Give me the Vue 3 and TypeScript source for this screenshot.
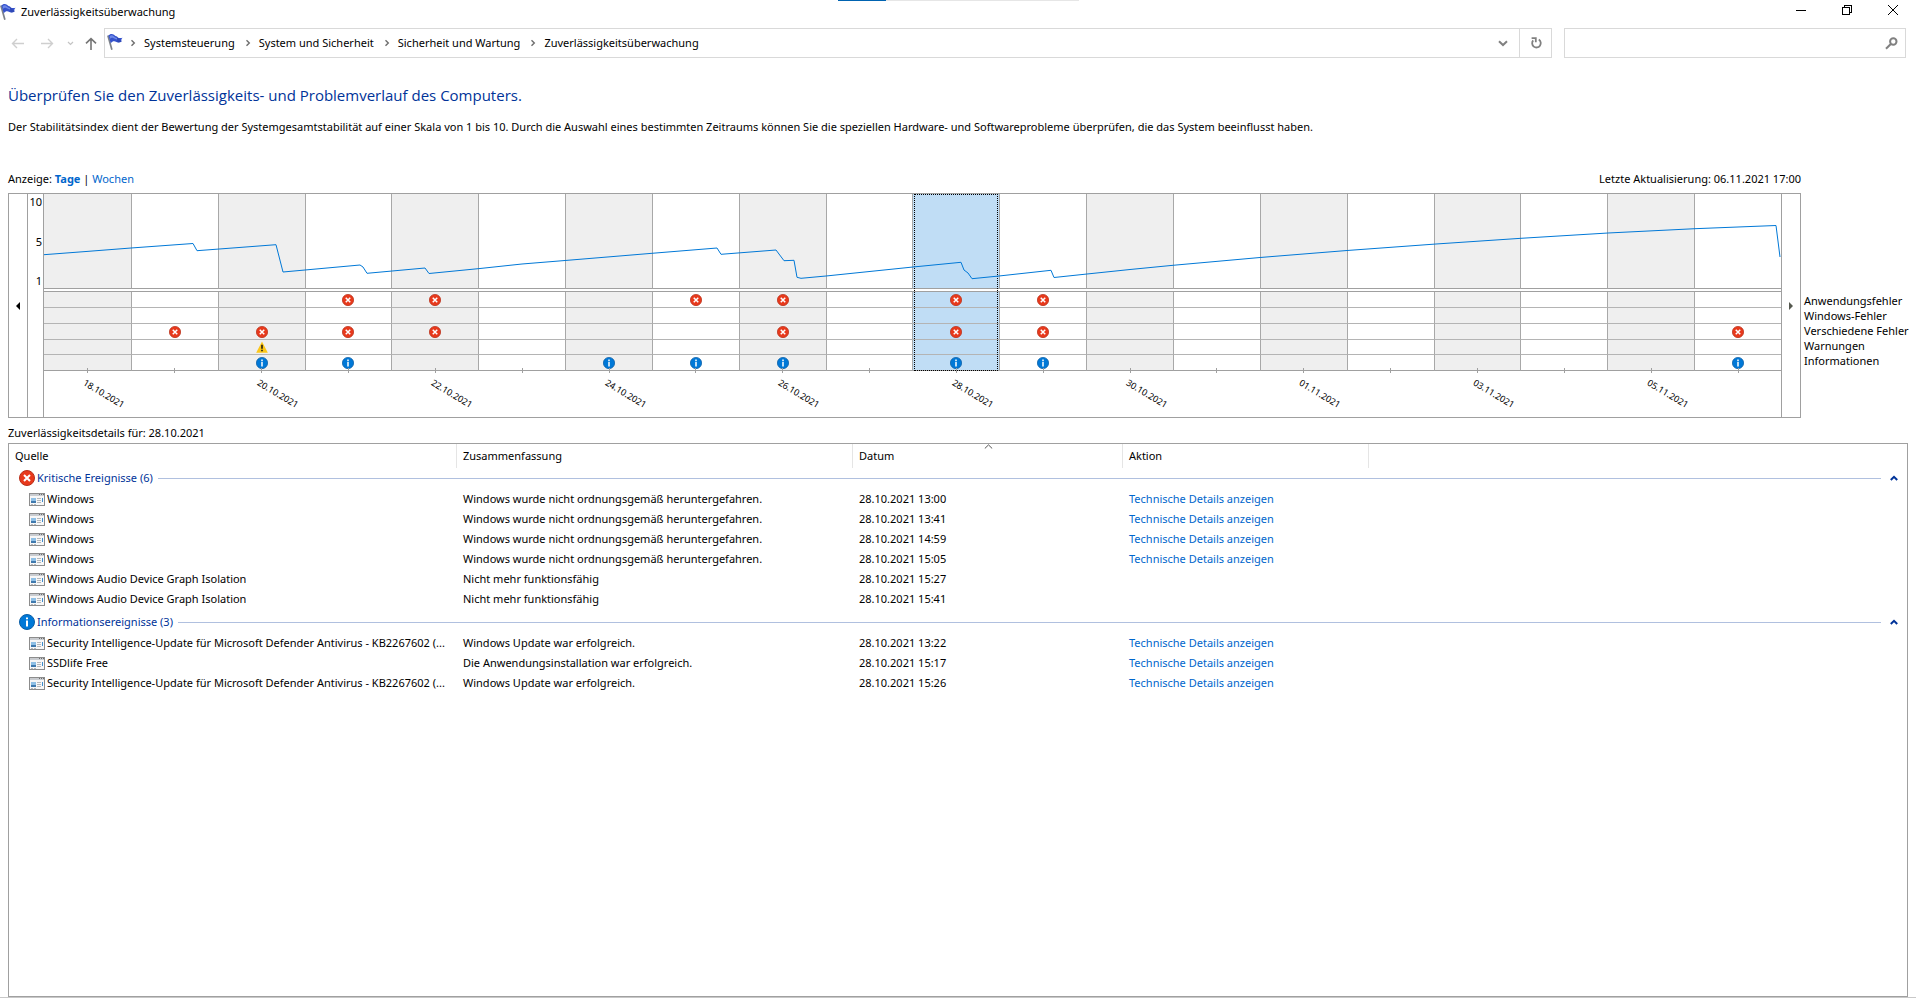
<script setup lang="ts">
import { computed, ref } from 'vue'

type Kind = 'error' | 'warning' | 'info'

interface EventRow {
  source: string
  summary: string
  date: string
  details: boolean
}

interface EventGroup {
  title: string
  kind: Kind
  open: boolean
  rows: EventRow[]
}

const crumbs = ['Systemsteuerung', 'System und Sicherheit', 'Sicherheit und Wartung', 'Zuverlässigkeitsüberwachung']

const categories: { label: string; kind: Kind; days: number[] }[] = [
  { label: 'Anwendungsfehler', kind: 'error', days: [3, 4, 7, 8, 10, 11] },
  { label: 'Windows-Fehler', kind: 'error', days: [] },
  { label: 'Verschiedene Fehler', kind: 'error', days: [1, 2, 3, 4, 8, 10, 11, 19] },
  { label: 'Warnungen', kind: 'warning', days: [2] },
  { label: 'Informationen', kind: 'info', days: [2, 3, 6, 7, 8, 10, 11, 19] },
]

const days = Array.from({ length: 20 }, (_, i) => {
  const d = new Date(2021, 9, 18 + i)
  const dd = String(d.getDate()).padStart(2, '0')
  const mm = String(d.getMonth() + 1).padStart(2, '0')
  return `${dd}.${mm}.${d.getFullYear()}`
})

const selected = ref(10)
const search = ref('')

// Stability index curve, drawn on a 1737 x 94 plot
const curve: [number, number][] = [
  [0, 60.7], [42, 57.5], [87, 54], [149, 49.5], [153, 56.7], [232, 50.7], [239, 78], [316, 71], [319, 73],
  [323, 79.3], [381, 74], [385, 79.5], [436, 74.5], [478, 70], [521, 66.5], [608, 59.3], [673, 54], [677, 60.3],
  [732, 56], [740, 66.7], [750, 66.3], [753, 83.3], [757, 84.3], [782, 82], [869, 73], [917, 68.3], [920, 76],
  [924, 79], [928, 84.7], [955, 82], [1007, 76.3], [1010, 83.5], [1043, 80], [1086, 75.5], [1129, 71.3],
  [1216, 63.5], [1303, 56.5], [1392, 50], [1477, 44.3], [1564, 39], [1651, 34.7], [1732, 31.5], [1736, 63],
]
const curvePoints = computed(() => curve.map((p) => p.join(',')).join(' '))

const crash = 'Windows wurde nicht ordnungsgemäß heruntergefahren.'
const defender = 'Security Intelligence-Update für Microsoft Defender Antivirus - KB2267602 (...'
const audio = 'Windows Audio Device Graph Isolation'

const groups = ref<EventGroup[]>([
  {
    title: 'Kritische Ereignisse (6)',
    kind: 'error',
    open: true,
    rows: [
      { source: 'Windows', summary: crash, date: '28.10.2021 13:00', details: true },
      { source: 'Windows', summary: crash, date: '28.10.2021 13:41', details: true },
      { source: 'Windows', summary: crash, date: '28.10.2021 14:59', details: true },
      { source: 'Windows', summary: crash, date: '28.10.2021 15:05', details: true },
      { source: audio, summary: 'Nicht mehr funktionsfähig', date: '28.10.2021 15:27', details: false },
      { source: audio, summary: 'Nicht mehr funktionsfähig', date: '28.10.2021 15:41', details: false },
    ],
  },
  {
    title: 'Informationsereignisse (3)',
    kind: 'info',
    open: true,
    rows: [
      { source: defender, summary: 'Windows Update war erfolgreich.', date: '28.10.2021 13:22', details: true },
      { source: 'SSDlife Free', summary: 'Die Anwendungsinstallation war erfolgreich.', date: '28.10.2021 15:17', details: true },
      { source: defender, summary: 'Windows Update war erfolgreich.', date: '28.10.2021 15:26', details: true },
    ],
  },
])
</script>

<template>
  <div class="window">
    <svg class="defs" width="0" height="0" aria-hidden="true">
      <symbol id="flag" viewBox="0 0 16 18">
        <path d="M.9 2.4 L4.9 16.8" stroke="#7d828a" stroke-width="1.7" fill="none" />
        <path d="M1.4 2.6 C3 .4 5.4 .6 7 1.8 C8.2 2.7 8.8 3.4 10 3.4 L10.6 4.4 C12 5.2 13.6 5.3 15.6 4.8 C14.4 6 14 6.8 14.6 8.4 C12.8 9.6 11 9.8 9.4 9 C7.4 8 5.6 8 3.8 10.4 Z" fill="#3552cc" />
        <path d="M2.6 3.2 C4 1.8 5.4 2.1 6.8 3.2 C8 4.2 8.8 4.8 10 5 L10.2 6.4 C8.6 6.4 7 5.2 5.6 4.8 C4.6 4.6 3.8 5 3.1 5.8 Z" fill="#6d87e6" />
        <path d="M9.8 3.6 L10.6 9.4 C12 9.6 13.4 9.2 14.6 8.4" fill="#2b43a6" opacity=".6" />
      </symbol>
      <symbol id="error" viewBox="0 0 16 16">
        <circle cx="8" cy="8" r="7.5" fill="#e8391c" stroke="#b8301a" />
        <path d="M5 5 L11 11 M11 5 L5 11" stroke="#fff" stroke-width="2" />
      </symbol>
      <symbol id="info" viewBox="0 0 16 16">
        <circle cx="8" cy="8" r="7.5" fill="#0078d7" stroke="#0a5ea6" />
        <path d="M7 3.4 H9 V5.2 H7 Z M7 6.4 H9 V12.6 H7 Z" fill="#fff" />
      </symbol>
      <symbol id="warning" viewBox="0 0 16 16">
        <path d="M8 .5 L15.8 15.5 H.2 Z" fill="#fcc71a" />
        <path d="M7 5 H9 V10.4 H7 Z M7 11.8 H9 V13.8 H7 Z" fill="#111" />
      </symbol>
      <symbol id="program" viewBox="0 0 16 13">
        <path d="M.5 .5 H15.5 V12.5 H.5 Z" fill="#f7f7f7" stroke="#8c8c8c" />
        <path d="M1 1 H15 V3 H1 Z" fill="#c9ccd0" />
        <path d="M10 1 H11 V2 H10 Z M12 1 H13 V2 H12 Z M14 1 H15 V2 H14 Z" fill="#6d6d6d" />
        <path d="M2 5 H7 V8 H2 Z" fill="#8fc0e6" />
        <path d="M2 8 H7 V10 H2 Z" fill="#3f79ad" />
        <path d="M8 5 H12 V6 H8 Z M8 7 H12 V8 H8 Z M8 9 H12 V10 H8 Z M2 11 H4 V12 H2 Z M5 11 H7 V12 H5 Z" fill="#b5b8bb" />
        <path d="M13 5 H14 V9 H13 Z" fill="#3d8ed0" />
      </symbol>
      <symbol id="crumb-sep" viewBox="0 0 6 8">
        <path d="M1.5 1.2 L4.3 4 L1.5 6.8" fill="none" stroke="#6e6e6e" stroke-width="1.4" />
      </symbol>
    </svg>

    <div class="progress" aria-hidden="true"><span></span></div>

    <header class="titlebar">
      <svg class="title-icon" width="16" height="18"><use href="#flag" /></svg>
      <span class="title">Zuverlässigkeitsüberwachung</span>
      <div class="controls">
        <button type="button" aria-label="Minimieren">
          <svg width="10" height="10" shape-rendering="crispEdges"><path d="M0 5.5 H10" stroke="#000" /></svg>
        </button>
        <button type="button" aria-label="Verkleinern">
          <svg width="10" height="10" shape-rendering="crispEdges">
            <path d="M.5 2.5 H7.5 V9.5 H.5 Z M2.5 2.5 V.5 H9.5 V7.5 H7.5" fill="none" stroke="#000" />
          </svg>
        </button>
        <button type="button" aria-label="Schließen">
          <svg width="10" height="10"><path d="M0 0 L10 10 M10 0 L0 10" stroke="#000" /></svg>
        </button>
      </div>
    </header>

    <nav class="navbar" aria-label="Navigation">
      <div class="history">
        <button type="button" disabled aria-label="Zurück">
          <svg width="13" height="11"><path d="M13 5.5 H1.5 M6 1 L1.5 5.5 L6 10" fill="none" stroke="#cfcfcf" stroke-width="1.4" /></svg>
        </button>
        <button type="button" disabled aria-label="Vorwärts">
          <svg width="13" height="11"><path d="M0 5.5 H11.5 M7 1 L11.5 5.5 L7 10" fill="none" stroke="#cfcfcf" stroke-width="1.4" /></svg>
        </button>
        <button type="button" disabled class="recent" aria-label="Zuletzt besuchte Seiten">
          <svg width="7" height="5"><path d="M1 1 L3.5 3.5 L6 1" fill="none" stroke="#c4c4c4" stroke-width="1.2" /></svg>
        </button>
        <button type="button" class="up" aria-label="Nach oben">
          <svg width="12" height="13"><path d="M6 13 V1.6 M1 6.4 L6 1.6 L11 6.4" fill="none" stroke="#757575" stroke-width="1.6" /></svg>
        </button>
      </div>
      <div class="address">
        <svg class="address-icon" width="16" height="18"><use href="#flag" /></svg>
        <ol class="crumbs">
          <li v-for="crumb in crumbs" :key="crumb">
            <svg width="6" height="8" aria-hidden="true"><use href="#crumb-sep" /></svg>
            <a href="#">{{ crumb }}</a>
          </li>
        </ol>
        <button type="button" class="drop" aria-label="Vorherige Orte">
          <svg width="10" height="7"><path d="M1 1.2 L5 5 L9 1.2" fill="none" stroke="#808080" stroke-width="2" /></svg>
        </button>
        <button type="button" class="refresh" aria-label="Aktualisieren">
          <svg width="12" height="12">
            <path d="M8.8 2.6 A4.3 4.3 0 1 1 3.2 3.4" fill="none" stroke="#808080" stroke-width="1.8" />
            <path d="M1.6 1.2 H5.8 V5.2" fill="none" stroke="#808080" stroke-width="1.8" />
          </svg>
        </button>
      </div>
      <div class="search">
        <input v-model="search" type="text" aria-label="Durchsuchen" />
        <svg width="13" height="13" aria-hidden="true">
          <circle cx="8.3" cy="4.5" r="3.2" fill="none" stroke="#808080" stroke-width="2" />
          <path d="M5.8 7 L1 11.8" stroke="#808080" stroke-width="2" />
        </svg>
      </div>
    </nav>

    <main class="content">
      <h1>Überprüfen Sie den Zuverlässigkeits- und Problemverlauf des Computers.</h1>
      <p class="intro">
        Der Stabilitätsindex dient der Bewertung der Systemgesamtstabilität auf einer Skala von 1 bis 10. Durch die
        Auswahl eines bestimmten Zeitraums können Sie die speziellen Hardware- und Softwareprobleme überprüfen, die das
        System beeinflusst haben.
      </p>

      <section class="report" aria-label="Stabilitätsdiagramm">
        <div class="report-head">
          <span>Anzeige: <a href="#" class="current">Tage</a> | <a href="#">Wochen</a></span>
          <span>Letzte Aktualisierung: 06.11.2021 17:00</span>
        </div>
        <div class="chart">
          <button type="button" class="scroll left" aria-label="Frühere Tage">
            <svg width="4" height="8"><path d="M4 0 V8 L0 4 Z" fill="#000" /></svg>
          </button>
          <div class="scale"><span>10</span><span>5</span><span>1</span></div>
          <div class="plot">
            <button
              v-for="(day, i) in days"
              :key="day"
              type="button"
              class="day"
              :class="{ selected: i === selected }"
              :aria-label="day"
              @click="selected = i"
            >
              <span class="score"></span>
              <span v-for="cat in categories" :key="cat.label" class="cell" :class="cat.kind">
                <svg v-if="cat.days.includes(i)" width="12" height="12"><use :href="'#' + cat.kind" /></svg>
              </span>
              <span class="axis"><span v-if="i % 2 === 0" class="date">{{ day }}</span></span>
            </button>
            <svg class="curve" viewBox="0 0 1737 94" preserveAspectRatio="none" aria-hidden="true">
              <polyline :points="curvePoints" fill="none" stroke="#0078d7" vector-effect="non-scaling-stroke" />
            </svg>
          </div>
          <button type="button" class="scroll right" aria-label="Spätere Tage">
            <svg width="4" height="8"><path d="M0 0 V8 L4 4 Z" fill="#55584f" /></svg>
          </button>
        </div>
        <ul class="legend">
          <li v-for="cat in categories" :key="cat.label">{{ cat.label }}</li>
        </ul>
      </section>

      <h2>Zuverlässigkeitsdetails für: {{ days[selected] }}</h2>
      <section class="list" aria-label="Zuverlässigkeitsdetails">
        <table>
          <colgroup>
            <col class="c-source" /><col class="c-summary" /><col class="c-date" /><col class="c-action" /><col />
          </colgroup>
          <thead>
            <tr>
              <th scope="col">Quelle</th>
              <th scope="col">Zusammenfassung</th>
              <th scope="col" class="sorted" aria-sort="ascending">
                Datum
                <svg width="9" height="5" aria-hidden="true"><path d="M.8 4.5 L4.5 .9 L8.2 4.5" fill="none" stroke="#555" /></svg>
              </th>
              <th scope="col">Aktion</th>
              <td></td>
            </tr>
          </thead>
          <tbody v-for="group in groups" :key="group.title">
            <tr class="group">
              <th colspan="5" scope="colgroup">
                <div class="group-bar">
                  <svg width="16" height="16" aria-hidden="true"><use :href="'#' + group.kind" /></svg>
                  <span>{{ group.title }}</span>
                  <i></i>
                  <button type="button" :aria-expanded="group.open" :aria-label="group.title" @click="group.open = !group.open">
                    <svg width="8" height="6"><path d="M.8 5 L4 1.8 L7.2 5" fill="none" stroke="#003399" stroke-width="2" /></svg>
                  </button>
                </div>
              </th>
            </tr>
            <template v-if="group.open">
              <tr v-for="row in group.rows" :key="row.date">
                <td>
                  <div class="source">
                    <svg width="16" height="13" shape-rendering="crispEdges" aria-hidden="true"><use href="#program" /></svg>
                    <span>{{ row.source }}</span>
                  </div>
                </td>
                <td>{{ row.summary }}</td>
                <td>{{ row.date }}</td>
                <td><a v-if="row.details" href="#">Technische Details anzeigen</a></td>
                <td></td>
              </tr>
            </template>
          </tbody>
        </table>
      </section>
    </main>
  </div>
</template>

<style>
body {
  margin: 0;
  background: #fff;
}
</style>

<style scoped>
* {
  box-sizing: border-box;
}

.window {
  position: relative;
  display: flex;
  flex-direction: column;
  min-height: 100vh;
  border-bottom: 1px solid #c8c8c8;
  font-family: 'Noto Sans', 'Open Sans', sans-serif;
  font-size: 11px;
  line-height: 16px;
  color: #000;
}

svg {
  display: block;
  flex: none;
}

.defs {
  position: absolute;
}

button {
  margin: 0;
  padding: 0;
  border: 0;
  background: none;
  font: inherit;
  color: inherit;
}

a {
  color: #0066cc;
  text-decoration: none;
}

.progress {
  position: absolute;
  top: 0;
  left: 50%;
  width: 241px;
  height: 1px;
  margin-left: -120px;
  background: #e6e6e6;
}

.progress span {
  display: block;
  width: 20%;
  height: 1px;
  background: #0063b1;
}

.titlebar {
  display: flex;
  align-items: center;
  height: 24px;
}

.title-icon {
  margin-right: 5px;
}

.controls {
  display: flex;
  align-self: flex-start;
  margin-left: auto;
}

.controls button {
  display: flex;
  justify-content: center;
  align-items: center;
  width: 46px;
  height: 20px;
}

.navbar {
  display: flex;
  align-items: center;
  height: 30px;
  margin: 4px 10px 0 0;
}

.history {
  display: flex;
  align-items: center;
  width: 104px;
  padding-left: 11px;
  gap: 17px;
}

.history .recent {
  margin-left: -4px;
}

.history .up {
  margin-left: -6px;
}

.address,
.search {
  display: flex;
  align-items: stretch;
  height: 30px;
  border: 1px solid #d9d9d9;
}

.address {
  flex: 1;
}

.address-icon {
  margin: 4px 0 0 2px;
}

.crumbs {
  display: flex;
  align-items: center;
  flex: 1;
  margin: 0 0 0 7px;
  padding: 0;
  list-style: none;
}

.crumbs li {
  display: flex;
  align-items: center;
  margin-right: 10px;
}

.crumbs a {
  margin-left: 8px;
  color: #000;
}

.drop,
.refresh {
  display: flex;
  align-items: center;
  justify-content: center;
  width: 32px;
}

.refresh {
  border-left: 1px solid #d9d9d9;
}

.search {
  align-items: center;
  width: 342px;
  margin-left: 12px;
  padding-right: 7px;
}

.search input {
  flex: 1;
  min-width: 0;
  height: 28px;
  padding: 0 6px;
  border: 0;
  outline: 0;
  background: none;
  font: inherit;
}

.content {
  display: flex;
  flex-direction: column;
  flex: 1;
  padding: 0 8px;
}

h1 {
  margin: 26px 0 13px;
  font-family: 'Open Sans', 'Noto Sans', sans-serif;
  font-size: 15px;
  font-weight: 400;
  line-height: 22px;
  color: #003399;
}

.intro {
  margin: 0;
}

.report {
  display: grid;
  grid-template-columns: 1fr 104px;
  column-gap: 3px;
  margin-top: 36px;
}

.report-head {
  display: flex;
  justify-content: space-between;
  grid-column: 1;
  margin-bottom: 6px;
}

.report-head .current {
  font-weight: 700;
}

.chart {
  display: grid;
  grid-column: 1;
  grid-template-columns: 19px 16px 1fr 19px;
  border: 1px solid #a0a0a0;
}

.scroll {
  display: flex;
  align-items: center;
  justify-content: center;
}

.scroll.left,
.scale {
  border-right: 1px solid #a0a0a0;
}

.scroll.right {
  border-left: 1px solid #a0a0a0;
}

.scale {
  display: flex;
  flex-direction: column;
  justify-content: space-between;
  height: 100%;
  padding: 0 1px 128px 0;
  text-align: right;
}

.plot {
  position: relative;
  display: grid;
  grid-template-columns: repeat(20, 1fr);
}

.day {
  position: relative;
  display: grid;
  grid-template-rows: 98px 16px 16px 16px 15px 16px 46px;
  min-width: 0;
}

.score,
.cell {
  border-bottom: 1px solid #a0a0a0;
  border-left: 1px solid #a8a8a8;
}

.score {
  height: 95px;
}

.score + .cell {
  box-shadow: 0 -1px #a0a0a0;
}

.cell {
  display: flex;
  align-items: center;
  justify-content: center;
  border-bottom-color: #b4b4b4;
}

.cell:nth-child(6) {
  border-bottom-color: #a0a0a0;
}

.day:nth-child(odd) .score,
.day:nth-child(odd) .cell {
  background: #efefef;
}

.day:first-child .score,
.day:first-child .cell {
  border-left: 0;
}

.day.selected .score,
.day.selected .cell {
  background: #c0ddf5;
}

.day.selected::before {
  content: '';
  position: absolute;
  top: 0;
  right: 1px;
  left: 2px;
  height: 175px;
  border: 1px dotted #000;
}

.axis {
  position: relative;
  display: block;
}

.axis::before {
  content: '';
  position: absolute;
  top: -3px;
  left: 50%;
  width: 1px;
  height: 5px;
  background: #a0a0a0;
}

.date {
  position: absolute;
  top: 5px;
  left: 50%;
  margin-left: -3px;
  font-size: 9px;
  line-height: 12px;
  white-space: nowrap;
  transform: rotate(31deg);
  transform-origin: 0 50%;
}

.curve {
  position: absolute;
  top: 0;
  left: 0;
  width: 100%;
  height: 94px;
  pointer-events: none;
}

.legend {
  grid-row: 2;
  grid-column: 2;
  margin: 100px 0 0;
  padding: 0;
  list-style: none;
  line-height: 15px;
  white-space: nowrap;
}

h2 {
  margin: 7px 0 2px;
  font-size: 11px;
  font-weight: 400;
}

.list {
  flex: 1;
  border: 1px solid #a0a0a0;
}

table {
  width: 100%;
  table-layout: fixed;
  border-collapse: separate;
  border-spacing: 0;
}

.c-source {
  width: 448px;
}

.c-summary {
  width: 396px;
}

.c-date {
  width: 270px;
}

.c-action {
  width: 246px;
}

th,
td {
  height: 20px;
  padding: 0 6px;
  font-weight: 400;
  text-align: left;
  white-space: nowrap;
}

thead th {
  height: 24px;
  border-right: 1px solid #e5e5e5;
}

.sorted {
  position: relative;
}

.sorted svg {
  position: absolute;
  top: 0;
  left: 50%;
  margin-left: -4px;
}

.group th {
  height: 21px;
  padding: 0 9px 1px 10px;
}

tbody + tbody .group th {
  height: 24px;
  padding-top: 3px;
}

.group-bar {
  display: flex;
  align-items: center;
  color: #003399;
}

.group-bar span {
  margin: 0 5px 0 2px;
}

.group-bar i {
  flex: 1;
  height: 1px;
  margin-right: 9px;
  background: #b0c0df;
}

.source {
  display: flex;
  align-items: center;
  padding-left: 14px;
}

.source span {
  margin-left: 2px;
  overflow: hidden;
  text-overflow: ellipsis;
}
</style>
